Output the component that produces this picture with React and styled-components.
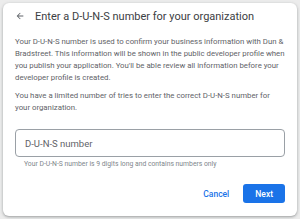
import React from 'react'
import styled, { createGlobalStyle } from 'styled-components'

const Global = createGlobalStyle`
  html, body {
    margin: 0;
    padding: 0;
    background: #ececec;
    font-family: 'Roboto', 'Liberation Sans', sans-serif;
  }
`

const Page = styled.div`
  width: 300px;
  height: 219px;
  padding: 3px;
  box-sizing: border-box;
`

const Card = styled.div`
  background: #fff;
  border-radius: 6px;
  box-shadow: 0 1px 2px rgba(60, 64, 67, 0.3), 0 1px 3px 1px rgba(60, 64, 67, 0.12);
  height: 213px;
  width: 294px;
  box-sizing: border-box;
  padding: 6px 12px 0 12px;
  display: flex;
  flex-direction: column;
`

const Header = styled.div`
  display: flex;
  align-items: center;
  gap: 10px;
  height: 14px;
`

const BackButton = styled.span`
  display: flex;
  width: 10px;
  height: 10px;
  color: #5f6368;
`

const Title = styled.h2`
  margin: 0;
  font-size: 11px;
  font-weight: 400;
  color: #3c4043;
  white-space: nowrap;
`

const Text = styled.p`
  margin: ${p => p.top}px 0 0 0;
  font-size: 7.8px;
  line-height: 12px;
  color: #5f6368;
`

const Field = styled.div`
  margin-top: 15px;
  height: 28px;
  border: 1px solid #9aa0a6;
  border-radius: 4px;
  box-sizing: border-box;
  display: flex;
  align-items: center;
  padding-left: 9px;
`

const Input = styled.input`
  border: none;
  outline: none;
  width: 100%;
  font-family: inherit;
  font-size: 9.5px;
  color: #202124;
  background: transparent;
  padding: 0;
  &::placeholder {
    color: #5f6368;
  }
`

const Helper = styled.div`
  margin: 3px 0 0 9px;
  font-size: 6.8px;
  line-height: 8px;
  color: #80868b;
`

const Actions = styled.div`
  margin-top: 16px;
  display: flex;
  justify-content: flex-end;
  align-items: center;
  gap: 6px;
`

const Button = styled.button`
  font-family: inherit;
  font-size: 8.5px;
  font-weight: 500;
  height: 19px;
  padding: 0 ${p => (p.primary ? 12 : 8)}px;
  border-radius: 3px;
  border: none;
  background: ${p => (p.primary ? '#1a73e8' : 'transparent')};
  color: ${p => (p.primary ? '#fff' : '#1a73e8')};
  cursor: pointer;
`

export default function App() {
  return (
    <Page>
      <Global />
      <Card>
        <Header>
          <BackButton>
            <svg viewBox="0 0 24 24" width="10" height="10" fill="currentColor">
              <path d="M20 11H7.83l5.59-5.59L12 4l-8 8 8 8 1.41-1.41L7.83 13H20v-2z" />
            </svg>
          </BackButton>
          <Title>Enter a D-U-N-S number for your organization</Title>
        </Header>
        <Text top={13}>
          Your D-U-N-S number is used to confirm your business information with Dun &amp;
          Bradstreet. This information will be shown in the public developer profile when
          you publish your application. You'll be able review all information before your
          developer profile is created.
        </Text>
        <Text top={6}>
          You have a limited number of tries to enter the correct D-U-N-S number for your
          organization.
        </Text>
        <Field>
          <Input placeholder="D-U-N-S number" />
        </Field>
        <Helper>Your D-U-N-S number is 9 digits long and contains numbers only</Helper>
        <Actions>
          <Button>Cancel</Button>
          <Button primary>Next</Button>
        </Actions>
      </Card>
    </Page>
  )
}
